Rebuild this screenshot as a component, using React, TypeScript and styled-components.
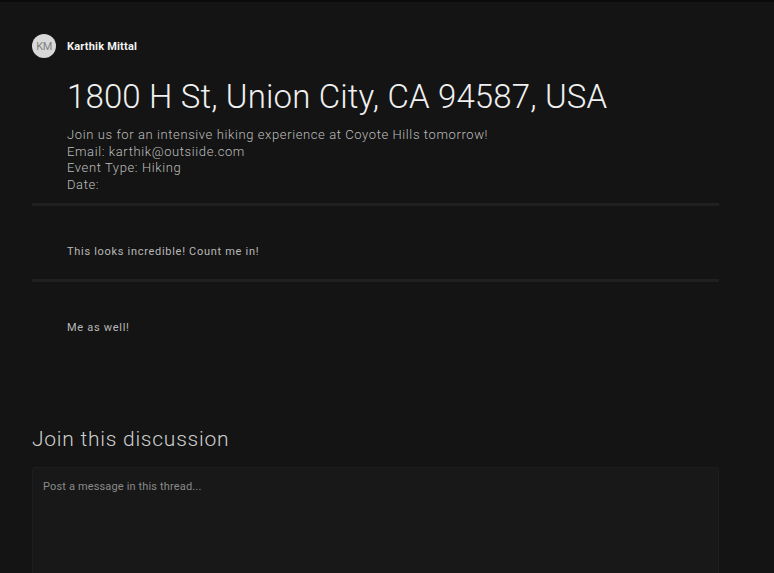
import React from 'react';
import styled, { createGlobalStyle } from 'styled-components';

const GlobalStyle = createGlobalStyle({
  'html, body': {
    margin: 0,
    padding: 0,
    background: '#141414',
    fontFamily: 'Roboto, "Noto Sans", sans-serif',
    overflow: 'hidden',
  },
});

const TopEdge = styled.div({
  height: 2,
  background: '#0a0a0a',
});

const Page = styled.div({
  width: 687,
  marginLeft: 32,
  paddingTop: 32,
});

const Author = styled.div({
  display: 'flex',
  alignItems: 'center',
  gap: 11,
});

const Avatar = styled.div({
  width: 24,
  height: 24,
  borderRadius: '50%',
  background: '#d8d8d8',
  color: '#808080',
  fontSize: 11,
  letterSpacing: -0.5,
  display: 'flex',
  alignItems: 'center',
  justifyContent: 'center',
});

const Name = styled.div({
  color: '#f2f2f2',
  fontSize: 11,
  fontWeight: 700,
  letterSpacing: 0.2,
});

const Post = styled.div({
  paddingLeft: 35,
  paddingBottom: 10,
});

const Title = styled.h1({
  margin: '18px 0 0',
  fontSize: 33,
  fontWeight: 300,
  color: '#f0f0f0',
  lineHeight: '42px',
  letterSpacing: 0.15,
});

const Details = styled.div({
  marginTop: 9,
  color: '#bdbdbd',
  fontSize: 13,
  lineHeight: '16.5px',
  letterSpacing: 0.6,
  fontWeight: 300,
});

const Divider = styled.hr({
  margin: 0,
  border: 0,
  height: 3,
  background: '#202020',
});

const Comment = styled.p({
  margin: 0,
  padding: '39px 35px 20px',
  color: '#b8b8b8',
  fontSize: 11,
  lineHeight: '14px',
  letterSpacing: 0.7,
});

const Heading = styled.h2({
  margin: '72px 0 0',
  fontSize: 21,
  fontWeight: 300,
  lineHeight: '25px',
  color: '#cfcfcf',
  letterSpacing: 0.75,
});

const MessageBox = styled.textarea({
  display: 'block',
  boxSizing: 'border-box',
  width: '100%',
  height: 120,
  marginTop: 15,
  padding: '12px 10px',
  background: '#181818',
  border: '1px solid #1e1e1e',
  borderRadius: 3,
  color: '#ccc',
  fontFamily: 'Roboto, sans-serif',
  fontSize: 11,
  letterSpacing: 0.15,
  resize: 'none',
  outline: 'none',
  '&::placeholder': {
    color: '#8a8a8a',
  },
});

const comments = ['This looks incredible! Count me in!', 'Me as well!'];

const App = () => {
  return (
    <>
      <GlobalStyle />
      <TopEdge />
      <Page>
        <Author>
          <Avatar>KM</Avatar>
          <Name>Karthik Mittal</Name>
        </Author>
        <Post>
          <Title>1800 H St, Union City, CA 94587, USA</Title>
          <Details>
            <div>Join us for an intensive hiking experience at Coyote Hills tomorrow!</div>
            <div>Email: karthik@outsiide.com</div>
            <div>Event Type: Hiking</div>
            <div>Date:</div>
          </Details>
        </Post>
        {comments.map((text) => (
          <React.Fragment key={text}>
            <Divider />
            <Comment>{text}</Comment>
          </React.Fragment>
        ))}
        <Heading>Join this discussion</Heading>
        <MessageBox placeholder="Post a message in this thread..." />
      </Page>
    </>
  );
};

export default App;
